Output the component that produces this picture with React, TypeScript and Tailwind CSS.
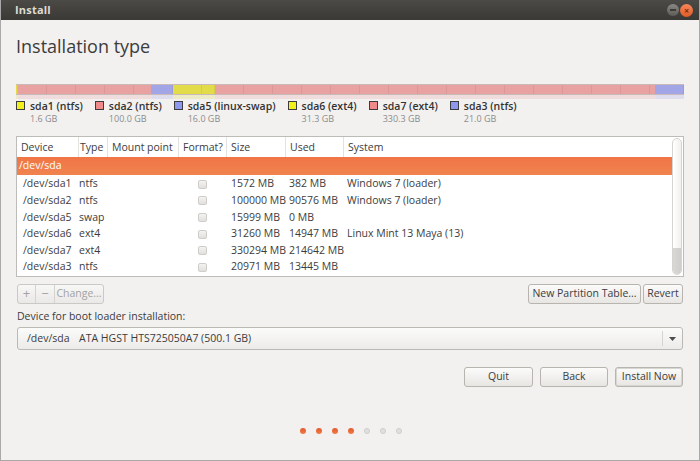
import React from "react";

const parts = [
  { name: "sda1 (ntfs)", size: "1.6 GB", gb: 1.6, bar: "bg-[#e2dc4a]", sw: "bg-[#f2f01c]" },
  { name: "sda2 (ntfs)", size: "100.0 GB", gb: 100, bar: "bg-[#e8a2a2]", sw: "bg-[#f08a8a]" },
  { name: "sda5 (linux-swap)", size: "16.0 GB", gb: 16, bar: "bg-[#a2a6e6]", sw: "bg-[#8e98ee]" },
  { name: "sda6 (ext4)", size: "31.3 GB", gb: 31.3, bar: "bg-[#e2dc4a]", sw: "bg-[#f2f01c]" },
  { name: "sda7 (ext4)", size: "330.3 GB", gb: 330.3, bar: "bg-[#e8a2a2]", sw: "bg-[#f08a8a]" },
  { name: "sda3 (ntfs)", size: "21.0 GB", gb: 21, bar: "bg-[#a2a6e6]", sw: "bg-[#8e98ee]" },
];

const rows = [
  ["/dev/sda1", "ntfs", "1572 MB", "382 MB", "Windows 7 (loader)"],
  ["/dev/sda2", "ntfs", "100000 MB", "90576 MB", "Windows 7 (loader)"],
  ["/dev/sda5", "swap", "15999 MB", "0 MB", ""],
  ["/dev/sda6", "ext4", "31260 MB", "14947 MB", "Linux Mint 13 Maya (13)"],
  ["/dev/sda7", "ext4", "330294 MB", "214642 MB", ""],
  ["/dev/sda3", "ntfs", "20971 MB", "13445 MB", ""],
];

const cols = "grid grid-cols-[62px_29px_71px_48px_59px_58px_1fr] whitespace-nowrap";
const btn =
  "h-[20px] rounded-[3px] border border-[#b8b5b0] bg-gradient-to-b from-[#fbfbfa] to-[#e8e6e3] text-[10.5px] text-[#3c3c3c] flex items-center justify-center whitespace-nowrap";

export default function App() {
  const total = parts.reduce((t, p) => t + p.gb, 0);

  return (
    <div className="w-[700px] h-[461px] bg-[#f2f1f0] flex flex-col border-r border-b border-l border-[#a9a9a9] text-[#3c3c3c] font-['Open_Sans',sans-serif] overflow-hidden">
      {/* title bar */}
      <div className="h-[20px] shrink-0 bg-gradient-to-b from-[#4b4a46] to-[#3a3935] flex items-center justify-between pl-[15px] pr-[7px] -mx-px">
        <span className="text-[11px] font-bold text-[#dfdbd2] tracking-[0.2px]">Install</span>
        <div className="flex items-center gap-[1px]">
          <span className="w-[12px] h-[12px] rounded-full bg-gradient-to-b from-[#8a8985] to-[#5d5c58] flex items-center justify-center">
            <span className="w-[6px] h-[2px] bg-[#3c3b37]" />
          </span>
          <span className="w-[13px] h-[13px] rounded-full bg-gradient-to-b from-[#f7875a] to-[#e05a24] flex items-center justify-center text-[9px] leading-none text-[#7a2a0c] font-bold">
            ×
          </span>
        </div>
      </div>

      <div className="flex flex-col px-[15px]">
        <h1 className="mt-[13px] text-[18px] leading-[26px] text-[#3c3c3c] font-normal">Installation type</h1>

        {/* partition bar */}
        <div className="mt-[25px] flex h-[11px] border-y border-[#c9b9b9]">
          {parts.map((p) => (
            <div
              key={p.name}
              className={`${p.bar} h-full border-r border-[rgba(0,0,0,0.06)] bg-[repeating-linear-gradient(90deg,transparent_0,transparent_28px,rgba(0,0,0,0.06)_28px,rgba(0,0,0,0.06)_29px)]`}
              style={{ width: `${(p.gb / total) * 100}%` }}
            />
          ))}
        </div>
        <div className="flex h-[4px] opacity-25">
          {parts.map((p) => (
            <div key={p.name} className={`${p.bar} h-full`} style={{ width: `${(p.gb / total) * 100}%` }} />
          ))}
        </div>

        {/* legend */}
        <div className="mt-[1px] flex gap-[12px] whitespace-nowrap">
          {parts.map((p) => (
            <div key={p.name} className="flex gap-[5px]">
              <span className={`${p.sw} w-[9px] h-[9px] mt-[1px] border border-[#3c3c3c]`} />
              <div className="flex flex-col">
                <span className="text-[10.5px] leading-[12px] font-semibold text-[#333]">{p.name}</span>
                <span className="text-[9px] leading-[14px] text-[#8c8c8c]">{p.size}</span>
              </div>
            </div>
          ))}
        </div>

        {/* partition table */}
        <div className="mt-[10px] h-[141px] border border-[#bebcb8] bg-white flex">
          <div className="flex-1 flex flex-col">
            <div className={`${cols} h-[20px] text-[10.5px] items-center`}>
              {["Device", "Type", "Mount point", "Format?", "Size", "Used", "System"].map((h, i) => (
                <div
                  key={h}
                  className={`h-full flex items-center pt-[2px] ${i === 1 ? "pl-[1px]" : "pl-[4px]"} ${i < 6 ? "border-r border-[#e4e2df]" : ""}`}
                >
                  {h}
                </div>
              ))}
            </div>
            <div className="h-[18px] bg-gradient-to-b from-[#f07545] to-[#f0834f] text-white text-[10.5px] flex items-center pl-[2px]">
              /dev/sda
            </div>
            <div className="pt-[1px] flex flex-col">
              {rows.map((r) => (
                <div key={r[0]} className={`${cols} h-[16.6px] text-[10.5px] items-center`}>
                  <div className="pl-[6px]">{r[0]}</div>
                  <div>{r[1]}</div>
                  <div />
                  <div className="flex justify-center pr-[1px]">
                    <span className="w-[9px] h-[9px] rounded-[2px] border border-[#cfcdca] bg-gradient-to-b from-[#f4f3f2] to-[#e2e0dd]" />
                  </div>
                  <div className="pl-[4px]">{r[2]}</div>
                  <div className="pl-[3px]">{r[3]}</div>
                  <div className="pl-[3px]">{r[4]}</div>
                </div>
              ))}
            </div>
          </div>
          <div className="w-[11px] py-[1px] pr-[1px]">
            <div className="h-full rounded-[5px] border border-[#d6d4d1] bg-gradient-to-r from-[#ffffff] to-[#f1f0ee] flex flex-col justify-end overflow-hidden">
              <div className="h-[26px] bg-gradient-to-r from-[#d9d8d6] to-[#cfcecc] rounded-b-[5px]" />
            </div>
          </div>
        </div>

        {/* toolbar */}
        <div className="mt-[7px] flex justify-between">
          <div className="flex h-[20px] ml-[1px] rounded-[3px] border border-[#cbc9c5] bg-gradient-to-b from-[#f7f7f6] to-[#ebe9e7] text-[#a3a3a3] text-[10.5px]">
            <span className="w-[18px] flex items-center justify-center border-r border-[#d5d3cf] text-[13px]">+</span>
            <span className="w-[19px] flex items-center justify-center border-r border-[#d5d3cf] text-[13px]">−</span>
            <span className="w-[48px] flex items-center justify-center">Change...</span>
          </div>
          <div className="flex gap-[2px] mr-[1px]">
            <button className={`${btn} w-[113px]`}>New Partition Table...</button>
            <button className={`${btn} w-[40px]`}>Revert</button>
          </div>
        </div>

        <div className="mt-[4px] ml-[1px] text-[10.5px] leading-[16px]">Device for boot loader installation:</div>

        <div className="mt-[3px] mx-[1px] h-[23px] rounded-[3px] border border-[#bcb9b4] bg-gradient-to-b from-[#fbfbfa] to-[#ecebe9] flex items-center text-[10.5px] whitespace-nowrap">
          <span className="pl-[9px] w-[61px]">/dev/sda</span>
          <span className="flex-1">ATA HGST HTS725050A7 (500.1 GB)</span>
          <span className="w-[20px] h-[15px] border-l border-[#d6d4d0] flex items-center justify-center">
            <svg width="7" height="4" viewBox="0 0 7 4">
              <path d="M0 0h7L3.5 4z" fill="#4c4c4c" />
            </svg>
          </span>
        </div>

        <div className="mt-[17px] flex justify-end gap-[7px] mr-[1px]">
          <button className={`${btn} w-[69px]`}>Quit</button>
          <button className={`${btn} w-[68px]`}>Back</button>
          <button className={`${btn} w-[68px] border-[#7d7b77] shadow-[inset_0_0_0_1px_#d8d6d2]`}>Install Now</button>
        </div>

        <div className="mt-[41px] flex justify-center gap-[10px] pl-[1px]">
          {[0, 1, 2, 3, 4, 5, 6].map((i) => (
            <span
              key={i}
              className={`w-[6px] h-[6px] rounded-full ${
                i < 4 ? "bg-gradient-to-b from-[#e35a2a] to-[#f07a46]" : "bg-[#e2e0de] border border-[#cfcdca]"
              }`}
            />
          ))}
        </div>
      </div>
    </div>
  );
}
